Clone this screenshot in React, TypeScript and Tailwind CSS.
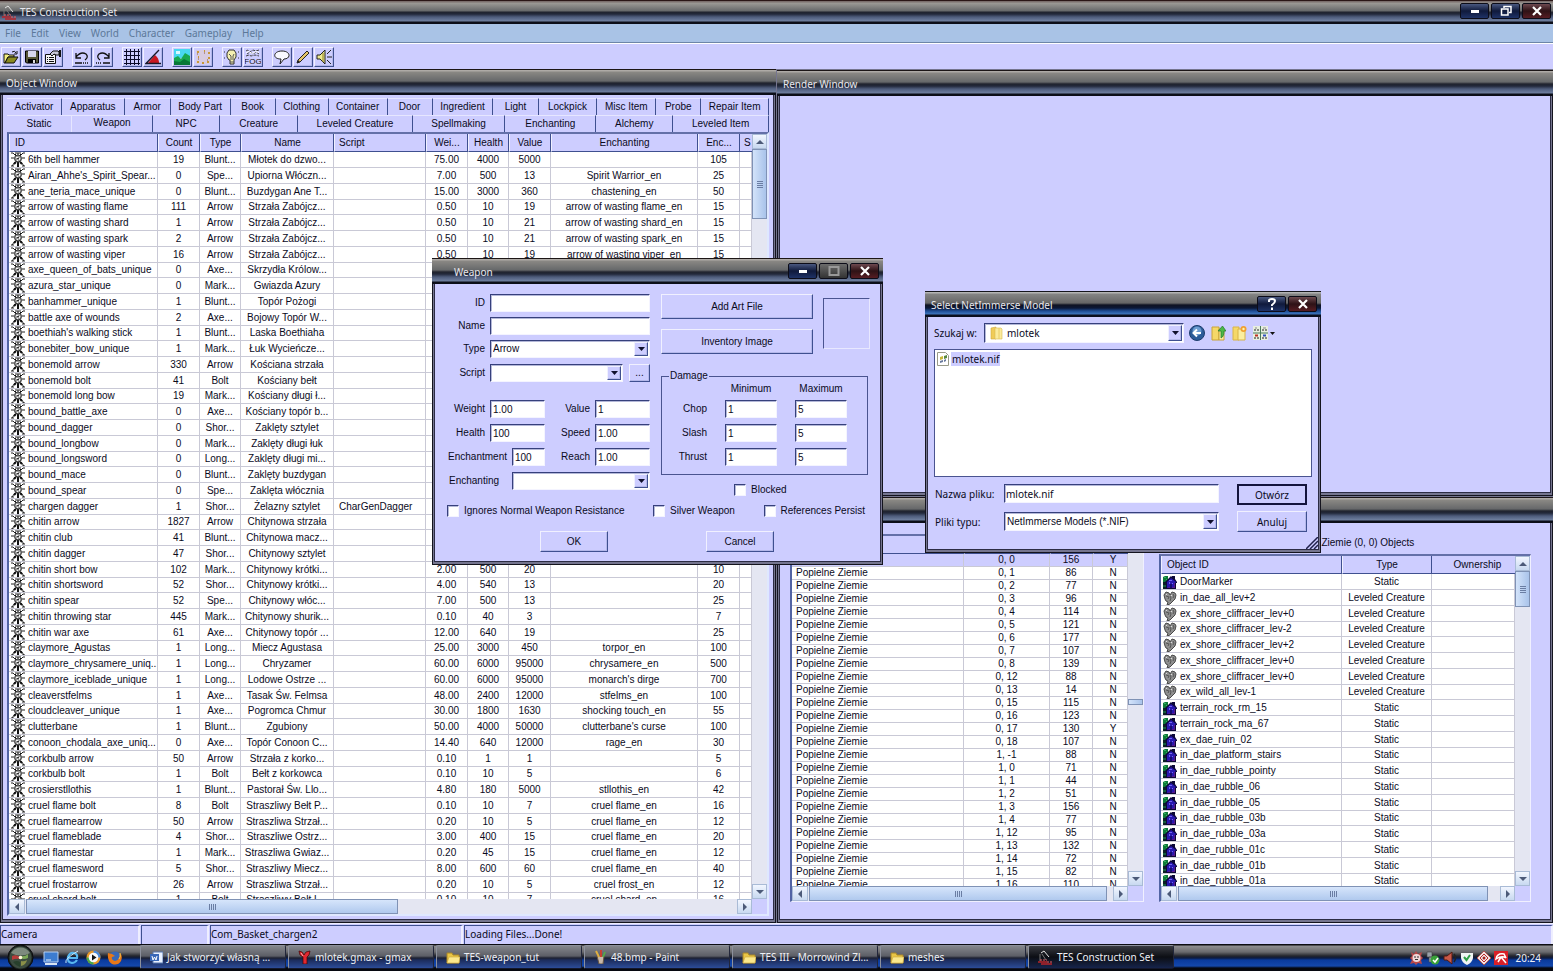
import { ReactNode } from "react";

type WeaponRow = string[];

// id, count, type, name, script, weight, health, value, enchanting, enchant points
const weapons: WeaponRow[] = [
  ["6th bell hammer", "19", "Blunt...", "Młotek do dzwo...", "", "75.00", "4000", "5000", "", "105"],
  ["Airan_Ahhe's_Spirit_Spear...", "0", "Spe...", "Upiorna Włóczn...", "", "7.00", "500", "13", "Spirit Warrior_en", "25"],
  ["ane_teria_mace_unique", "0", "Blunt...", "Buzdygan Ane T...", "", "15.00", "3000", "360", "chastening_en", "50"],
  ["arrow of wasting flame", "111", "Arrow", "Strzała Zabójcz...", "", "0.50", "10", "19", "arrow of wasting flame_en", "15"],
  ["arrow of wasting shard", "1", "Arrow", "Strzała Zabójcz...", "", "0.50", "10", "21", "arrow of wasting shard_en", "15"],
  ["arrow of wasting spark", "2", "Arrow", "Strzała Zabójcz...", "", "0.50", "10", "21", "arrow of wasting spark_en", "15"],
  ["arrow of wasting viper", "16", "Arrow", "Strzała Zabójcz...", "", "0.50", "10", "19", "arrow of wasting viper_en", "15"],
  ["axe_queen_of_bats_unique", "0", "Axe...", "Skrzydła Królow..."],
  ["azura_star_unique", "0", "Mark...", "Gwiazda Azury"],
  ["banhammer_unique", "1", "Blunt...", "Topór Pożogi"],
  ["battle axe of wounds", "2", "Axe...", "Bojowy Topór W..."],
  ["boethiah's walking stick", "1", "Blunt...", "Laska Boethiaha"],
  ["bonebiter_bow_unique", "1", "Mark...", "Łuk Wycieńcze..."],
  ["bonemold arrow", "330", "Arrow", "Kościana strzała"],
  ["bonemold bolt", "41", "Bolt", "Kościany bełt"],
  ["bonemold long bow", "19", "Mark...", "Kościany długi ł..."],
  ["bound_battle_axe", "0", "Axe...", "Kościany topór b..."],
  ["bound_dagger", "0", "Shor...", "Zaklęty sztylet"],
  ["bound_longbow", "0", "Mark...", "Zaklęty długi łuk"],
  ["bound_longsword", "0", "Long...", "Zaklęty długi mi..."],
  ["bound_mace", "0", "Blunt...", "Zaklęty buzdygan"],
  ["bound_spear", "0", "Spe...", "Zaklęta włócznia"],
  ["chargen dagger", "1", "Shor...", "Żelazny sztylet", "CharGenDagger"],
  ["chitin arrow", "1827", "Arrow", "Chitynowa strzała"],
  ["chitin club", "41", "Blunt...", "Chitynowa macz..."],
  ["chitin dagger", "47", "Shor...", "Chitynowy sztylet"],
  ["chitin short bow", "102", "Mark...", "Chitynowy krótki...", "", "2.00", "500", "20", "", "10"],
  ["chitin shortsword", "52", "Shor...", "Chitynowy krótki...", "", "4.00", "540", "13", "", "20"],
  ["chitin spear", "52", "Spe...", "Chitynowy włóc...", "", "7.00", "500", "13", "", "25"],
  ["chitin throwing star", "445", "Mark...", "Chitynowy shurik...", "", "0.10", "40", "3", "", "7"],
  ["chitin war axe", "61", "Axe...", "Chitynowy topór ...", "", "12.00", "640", "19", "", "25"],
  ["claymore_Agustas", "1", "Long...", "Miecz Agustasa", "", "25.00", "3000", "450", "torpor_en", "100"],
  ["claymore_chrysamere_uniq...", "1", "Long...", "Chryzamer", "", "60.00", "6000", "95000", "chrysamere_en", "500"],
  ["claymore_iceblade_unique", "1", "Long...", "Lodowe Ostrze ...", "", "60.00", "6000", "95000", "monarch's dirge", "700"],
  ["cleaverstfelms", "1", "Axe...", "Tasak Św. Felmsa", "", "48.00", "2400", "12000", "stfelms_en", "100"],
  ["cloudcleaver_unique", "1", "Axe...", "Pogromca Chmur", "", "30.00", "1800", "1630", "shocking touch_en", "55"],
  ["clutterbane", "1", "Blunt...", "Zgubiony", "", "50.00", "4000", "50000", "clutterbane's curse", "100"],
  ["conoon_chodala_axe_uniq...", "0", "Axe...", "Topór Conoon C...", "", "14.40", "640", "12000", "rage_en", "30"],
  ["corkbulb arrow", "50", "Arrow", "Strzała z korko...", "", "0.10", "1", "1", "", "5"],
  ["corkbulb bolt", "1", "Bolt", "Bełt z korkowca", "", "0.10", "10", "5", "", "6"],
  ["crosierstllothis", "1", "Blunt...", "Pastorał Św. Llo...", "", "4.80", "180", "5000", "stllothis_en", "42"],
  ["cruel flame bolt", "8", "Bolt", "Straszliwy Bełt P...", "", "0.10", "10", "7", "cruel flame_en", "16"],
  ["cruel flamearrow", "50", "Arrow", "Straszliwa Strzał...", "", "0.20", "10", "5", "cruel flame_en", "12"],
  ["cruel flameblade", "4", "Shor...", "Straszliwe Ostrz...", "", "3.00", "400", "15", "cruel flame_en", "20"],
  ["cruel flamestar", "1", "Mark...", "Straszliwa Gwiaz...", "", "0.20", "45", "15", "cruel flame_en", "12"],
  ["cruel flamesword", "5", "Shor...", "Straszliwy Miecz...", "", "8.00", "600", "60", "cruel flame_en", "40"],
  ["cruel frostarrow", "26", "Arrow", "Straszliwa Strzał...", "", "0.20", "10", "5", "cruel frost_en", "12"],
  ["cruel shard bolt", "1", "Bolt", "Straszliwy Bełt L...", "", "0.10", "10", "7", "cruel shard_en", "16"],
];

const cells = [
  ["0, 0", "156", "Y"], ["0, 1", "86", "N"], ["0, 2", "77", "N"], ["0, 3", "96", "N"],
  ["0, 4", "114", "N"], ["0, 5", "121", "N"], ["0, 6", "177", "N"], ["0, 7", "107", "N"],
  ["0, 8", "139", "N"], ["0, 12", "88", "N"], ["0, 13", "14", "N"], ["0, 15", "115", "N"],
  ["0, 16", "123", "N"], ["0, 17", "130", "Y"], ["0, 18", "107", "N"], ["1, -1", "88", "N"],
  ["1, 0", "71", "N"], ["1, 1", "44", "N"], ["1, 2", "51", "N"], ["1, 3", "156", "N"],
  ["1, 4", "77", "N"], ["1, 12", "95", "N"], ["1, 13", "132", "N"], ["1, 14", "72", "N"],
  ["1, 15", "82", "N"], ["1, 16", "110", "N"],
];

const cellObjects = [
  ["DoorMarker", "Static"],
  ["in_dae_all_lev+2", "Leveled Creature"],
  ["ex_shore_cliffracer_lev+0", "Leveled Creature"],
  ["ex_shore_cliffracer_lev-2", "Leveled Creature"],
  ["ex_shore_cliffracer_lev+2", "Leveled Creature"],
  ["ex_shore_cliffracer_lev+0", "Leveled Creature"],
  ["ex_shore_cliffracer_lev+0", "Leveled Creature"],
  ["ex_wild_all_lev-1", "Leveled Creature"],
  ["terrain_rock_rm_15", "Static"],
  ["terrain_rock_ma_67", "Static"],
  ["ex_dae_ruin_02", "Static"],
  ["in_dae_platform_stairs", "Static"],
  ["in_dae_rubble_pointy", "Static"],
  ["in_dae_rubble_06", "Static"],
  ["in_dae_rubble_05", "Static"],
  ["in_dae_rubble_03b", "Static"],
  ["in_dae_rubble_03a", "Static"],
  ["in_dae_rubble_01c", "Static"],
  ["in_dae_rubble_01b", "Static"],
  ["in_dae_rubble_01a", "Static"],
];

const topTabs = [
  ["Activator", "grow-55"], ["Apparatus", "grow-63"], ["Armor", "grow-46"], ["Body Part", "grow-60"],
  ["Book", "grow-45"], ["Clothing", "grow-53"], ["Container", "grow-59"], ["Door", "grow-45"],
  ["Ingredient", "grow-61"], ["Light", "grow-45"], ["Lockpick", "grow-59"], ["Misc Item", "grow-59"],
  ["Probe", "grow-45"], ["Repair Item", "grow-68"],
];

const bottomTabs = [
  ["Static", "grow-65"], ["Weapon", "grow-81"], ["NPC", "grow-67"], ["Creature", "grow-78"],
  ["Leveled Creature", "grow-115"], ["Spellmaking", "grow-93"], ["Enchanting", "grow-91"],
  ["Alchemy", "grow-77"], ["Leveled Item", "grow-96"],
];

const raised =
  "border border-t-[#f0f0ff] border-l-[#f0f0ff] border-r-[#3f5090] border-b-[#3f5090] bg-[#cdcdff] shadow-[inset_-1px_-1px_0_#b4b8ea]";
const sunken =
  "border border-t-[#36407c] border-l-[#36407c] border-r-[#f4f4ff] border-b-[#f4f4ff] bg-white shadow-[inset_1px_1px_0_#b4b8d8]";
const sans = "font-['Liberation_Sans',Arial,sans-serif]";
const tahoma = "font-['Noto_Sans',sans-serif] text-[10px]";

function SwordIcon() {
  return (
    <svg width="14" height="15" viewBox="0 0 14 15" className="shrink-0">
      <path d="M0 1h2l3 3M14 1h-2L9 4M0 6h3M11 6h3M1 14l3-4M13 14l-3-4M4 1h6M7 1v2M0 14h3M11 14h3" stroke="#222" fill="none" />
      <path d="M4 2h1v1H4zM9 2h1v1H9zM6 10h2v5H6z" fill="#111" />
      <circle cx="7" cy="6.500" r="3.500" fill="#9a9a9a" stroke="#333" />
      <path d="M5 5h2v1H5zM8 6h1v2H8zM6 8h1v1H6z" fill="#f4f4f4" />
      <path d="M6 6h2v1H6z" fill="#333" />
      <path d="M3 12l2-2M11 12l-2-2" stroke="#111" strokeWidth="2" />
    </svg>
  );
}

function HouseIcon() {
  return (
    <svg width="14" height="14" viewBox="0 0 14 14" className="shrink-0">
      <path d="M0 2l2-1h3v4l-2 3H0z" fill="#0e7a38" />
      <path d="M1 2h2v1H1zM3 4h1v1H3z" fill="#38b060" />
      <path d="M0 7h4v7H0z" fill="#0a2024" />
      <path d="M0 10h3v2H0z" fill="#145c3c" />
      <path d="M2 7l6-6 1 1V1h3v3l2 3v1h-1v6H3V8H2z" fill="#0c0838" />
      <path d="M4 7l4-4 5 4-1 1v5H4z" fill="#2818b0" />
      <path d="M11 8h1v5h-1zM5 12h7v1H5z" fill="#58188c" />
      <path d="M6 5h3v1H6zM6 7h1v2H6zM9 8h1v1H9z" fill="#7468f0" />
      <path d="M7 9h2v4H7z" fill="#160c70" />
    </svg>
  );
}

function CreatureIcon() {
  return (
    <svg width="14" height="14" viewBox="0 0 14 14" className="shrink-0">
      <path d="M1 4l2-3 3 1 1 2 2-3 3 1 1 2-1 4-3 3-2 2-3 1H4l1-3-2-1-1-2z" fill="#8f8f8f" stroke="#484848" />
      <path d="M3 5l3 1-1 2M7 5l1 2-1 3M10 3l1 2-1 2" stroke="#555" fill="none" />
      <path d="M3 3h1v1H3zM8 4h1v1H8z" fill="#ddd" />
    </svg>
  );
}

function FolderIcon() {
  return (
    <svg width="14" height="13" viewBox="0 0 14 13" className="shrink-0">
      <path d="M1 2h5l1 2h6v8H1z" fill="#e9c544" stroke="#a8862a" />
      <path d="M1 12l2-6h11l-1 6z" fill="#fbe88c" stroke="#c9a63c" strokeWidth=".6" />
    </svg>
  );
}

// yellow half-open folder used in the "look in" box
function OpenFolderIcon() {
  return (
    <svg width="13" height="14" viewBox="0 0 13 14" className="shrink-0">
      <path d="M1 2l5-1v12H1z" fill="#f0cc58" stroke="#d0a840" strokeWidth=".6" />
      <path d="M5 2h6l1 1v10H5z" fill="#fbeb9c" stroke="#d8b850" strokeWidth=".6" />
      <path d="M9 2v11" stroke="#e8cc68" />
    </svg>
  );
}

function AppIcon() {
  return (
    <svg width="15" height="15" viewBox="0 0 15 15" className="shrink-0">
      <path d="M3 3l3-2 5 6" stroke="#e4e4e4" fill="none" />
      <path d="M2 4v7M4 4l4 6" stroke="#777" fill="none" />
      <path d="M0 12h9M3 14h11" stroke="#b8242a" strokeWidth="1.500" />
      <path d="M2 10h7M9 12h5" stroke="#e86060" strokeDasharray="2 1" />
    </svg>
  );
}

function Arrow({ dir }: { dir: "up" | "down" | "left" | "right" }) {
  const paths = {
    up: "M0 6l4-4 4 4z",
    down: "M0 2l4 4 4-4z",
    left: "M6 0L2 4l4 4z",
    right: "M2 0l4 4-4 4z",
  };
  return (
    <svg width="8" height="8" viewBox="0 0 8 8">
      <path d={paths[dir]} fill="#4c5a78" />
    </svg>
  );
}

const scrollButton =
  "flex items-center justify-center shrink-0 border border-[#a9bbd6] bg-linear-to-b from-[#f2f6ff] to-[#c8d9f0]";

type ScrollProps = {
  thumb: string;
  before?: string;
  grip?: boolean;
};

function VScroll({ thumb, before, grip = true }: ScrollProps) {
  return (
    <div className="flex flex-col w-[15px] shrink-0 bg-[#e4e6f2]">
      <button aria-label="Scroll up" className={`${scrollButton} h-[15px]`}>
        <Arrow dir="up" />
      </button>
      {before && <div className={before} />}
      <div className={`flex flex-col items-center justify-center gap-px border border-[#7f92b5] bg-linear-to-r from-[#d3e3fa] to-[#a9c3ea] ${thumb}`}>
        {grip && [0, 1, 2, 3].map((i) => <span key={i} className="w-[6px] h-px bg-[#6a7da3]" />)}
      </div>
      <div className="flex-1" />
      <button aria-label="Scroll down" className={`${scrollButton} h-[15px]`}>
        <Arrow dir="down" />
      </button>
    </div>
  );
}

function HScroll({ thumb }: ScrollProps) {
  return (
    <div className="flex h-[15px] shrink-0 flex-1 bg-[#e4e6f2]">
      <button aria-label="Scroll left" className={`${scrollButton} w-[16px]`}>
        <Arrow dir="left" />
      </button>
      <div className={`flex items-center justify-center gap-px ml-px border border-[#7f92b5] bg-linear-to-b from-[#d6e5fb] to-[#b0c9ee] ${thumb}`}>
        {[0, 1, 2, 3].map((i) => <span key={i} className="w-px h-[6px] bg-[#6a7da3]" />)}
      </div>
      <div className="grow" />
      <button aria-label="Scroll right" className={`${scrollButton} w-[15px]`}>
        <Arrow dir="right" />
      </button>
    </div>
  );
}

function CaptionButton({ kind }: { kind: "min" | "max" | "restore" | "close" | "help" }) {
  const bg =
    kind === "close"
      ? "bg-linear-to-b from-[#6e4a50] via-[#2e1216] to-[#561c22]"
      : kind === "max"
        ? "bg-linear-to-b from-[#6c6c6c] to-[#333]"
        : "bg-linear-to-b from-[#4a5880] via-[#101a3c] to-[#1e3266]";
  return (
    <button aria-label={kind} className={`flex items-center justify-center w-[29px] h-4 rounded-[2px] border border-[#0c0c18] ${bg}`}>
      <svg width="12" height="12" viewBox="0 0 12 12" fill="none" stroke="#fff">
        {kind === "min" && <path d="M2 6.500h8" strokeWidth="3" />}
        {kind === "max" && <path d="M1.500 2h9v8h-9z" stroke="#999" strokeWidth="2" />}
        {kind === "restore" && <path d="M4 3V1.500h7v6H9M1.500 4h6.500v6H1.500z" strokeWidth="1.500" />}
        {kind === "close" && <path d="M2 2l8 8M10 2l-8 8" strokeWidth="2.200" />}
        {kind === "help" && <path d="M3 4V2.500Q3 1 6 1t3 2-3 4v1M6 9.500V12" strokeWidth="2" />}
      </svg>
    </button>
  );
}

type TitleBarProps = {
  title: string;
  active?: boolean;
  icon?: ReactNode;
  textClass?: string;
  children?: ReactNode;
};

function TitleBar({ title, active, icon, textClass = "pl-[6px]", children }: TitleBarProps) {
  const bg = active
    ? "bg-[linear-gradient(to_bottom,#15151c_0_1px,#b4b4b4_1px_2px,#848484_3px,#666_12px,#0e1222_14px,#0c1836_17px,#1d4c94_20px,#3c74bc_23px,#0a0e1e_24px)]"
    : "bg-[linear-gradient(to_bottom,#1c1616_0_1px,#aeaaa6_1px_2px,#8a8884_3px,#66686a_12px,#20232e_14px,#22283a_16px,#4e5c7c_19px,#6f7f9f_23px,#0c0e18_24px)]";
  return (
    <div className={`flex items-center h-[26px] shrink-0 text-[#e8e8ee] ${tahoma} ${bg}`}>
      {icon}
      <span className={`flex-1 pt-[2px] ${textClass}`}>{title}</span>
      <div className="flex gap-[2px] pr-1">{children}</div>
    </div>
  );
}

function Frame({ children, className = "" }: { children: ReactNode; className?: string }) {
  return (
    <div className={`flex-1 min-h-0 flex flex-col border-x border-b border-[#14141e] bg-[#75758f] px-px pb-[2px] ${className}`}>
      <div className="flex-1 min-h-0 flex flex-col border-x border-b border-[#2c2c44] bg-[#cdcdff]">{children}</div>
    </div>
  );
}

const th =
  "h-[18px] p-0 font-normal border-b border-r border-b-[#3f5090] border-r-[#3f5090] bg-[#cdcdff] border-l border-l-[#f0f0ff]";
const td = "p-0 text-center border-r border-b border-[#c9c9d6] overflow-hidden";

function Tabs({ items }: { items: string[][] }) {
  return (
    <div role="tablist" className="flex h-[17px]">
      {items.map(([label, grow]) => (
        <button
          key={label}
          role="tab"
          aria-selected={label === "Weapon"}
          className={`basis-0 min-w-0 ${grow} border-t border-t-[#e6e6ff] ${
            label === "Weapon" ? "pb-[3px]" : ""
          } ${label === "Static" ? "border-r border-r-[#e6e6ff]" : "border-r border-r-[#3f5090]"} leading-[14px]`}
        >
          {label}
        </button>
      ))}
    </div>
  );
}

function ObjectWindow() {
  return (
    <section className="flex-1 min-w-0 flex flex-col">
      <TitleBar title="Object Window" />
      <Frame>
        <div className="flex-1 min-h-0 flex flex-col pt-[3px] px-[4px] pb-[3px]">
          <Tabs items={topTabs} />
          <Tabs items={bottomTabs} />
          <div className="flex-1 min-h-0 flex flex-col border-2 border-t-[#6470a8] border-l-[#5264a4] border-r-[#dfe8ff] border-b-[#dfe8ff]">
            <div className="flex-1 min-h-0 flex bg-white">
              <div className="flex-1 min-w-0 overflow-hidden">
                <table className="w-full table-fixed border-separate border-spacing-0 whitespace-nowrap leading-[14px]">
                  <colgroup>
                    <col className="w-[149px]" />
                    <col className="w-[42px]" />
                    <col className="w-[41px]" />
                    <col className="w-[93px]" />
                    <col className="w-[92px]" />
                    <col className="w-[42px]" />
                    <col className="w-[41px]" />
                    <col className="w-[42px]" />
                    <col />
                    <col className="w-[42px]" />
                    <col className="w-[12px]" />
                  </colgroup>
                  <thead>
                    <tr>
                      <th className={`${th} text-left pl-[5px]`}>ID</th>
                      <th className={th}>Count</th>
                      <th className={th}>Type</th>
                      <th className={th}>Name</th>
                      <th className={`${th} text-left pl-[4px]`}>Script</th>
                      <th className={th}>Wei...</th>
                      <th className={th}>Health</th>
                      <th className={th}>Value</th>
                      <th className={th}>Enchanting</th>
                      <th className={th}>Enc...</th>
                      <th className="h-[18px] p-0 font-normal border-b border-[#3f5090] bg-[#cdcdff] pl-[4px] text-left">S</th>
                    </tr>
                  </thead>
                  <tbody>
                    {weapons.map((row) => (
                      <tr key={row[0]} className="h-4 nth-[4n]:h-[15px]">
                        <td className={td}>
                          <div className="flex items-center h-[14px] pl-[2px] gap-[3px]">
                            <SwordIcon />
                            {row[0]}
                          </div>
                        </td>
                        {[1, 2, 3, 4, 5, 6, 7, 8, 9, 10].map((i) => (
                          <td key={i} className={`${td} ${i === 4 ? "text-left pl-[5px]" : ""}`}>
                            {row[i]}
                          </td>
                        ))}
                      </tr>
                    ))}
                  </tbody>
                </table>
              </div>
              <VScroll thumb="h-[70px]" />
            </div>
            <div className="flex bg-[#cdcdff]">
              <HScroll thumb="w-[372px]" />
              <div className="w-[15px]" />
            </div>
          </div>
        </div>
      </Frame>
    </section>
  );
}

function CellWindow() {
  return (
    <section className="flex-1 min-h-0 flex flex-col">
      <TitleBar title="" />
      <Frame>
        <div className="flex-1 min-h-0 flex gap-[15px] pt-[11px] pl-[10px] pr-[19px] pb-[17px]">
          <div className="w-[354px] flex flex-col border-t-2 border-l-2 border-r border-b border-t-[#6470a8] border-l-[#5264a4] border-[#f0f0ff]">
            <div className="flex-1 min-h-0 flex bg-white">
              <div className="flex-1 min-w-0 overflow-hidden">
                <table className="w-full table-fixed border-separate border-spacing-0 whitespace-nowrap leading-[12px]">
                  <colgroup>
                    <col />
                    <col className="w-[86px]" />
                    <col className="w-[43px]" />
                    <col className="w-[35px]" />
                  </colgroup>
                  <thead>
                    <tr>
                      <th className={th} />
                      <th className={th} />
                      <th className={th} />
                      <th className={th} />
                    </tr>
                  </thead>
                  <tbody>
                    {cells.map(([grid, count, path], i) => (
                      <tr key={grid} className={`h-[13px] ${i === 0 ? "bg-[#cdcdff]" : ""}`}>
                        <td className={`${td} text-left pl-[4px]`}>Popielne Ziemie</td>
                        <td className={td}>{grid}</td>
                        <td className={td}>{count}</td>
                        <td className={`${td} pl-[6px]`}>{path}</td>
                      </tr>
                    ))}
                  </tbody>
                </table>
              </div>
              <VScroll before="h-[148px]" thumb="h-[6px]" grip={false} />
            </div>
            <div className="flex bg-[#cdcdff]">
              <HScroll thumb="w-[298px]" />
              <div className="w-[15px]" />
            </div>
          </div>
          <div className="flex-1 min-w-0 flex flex-col">
            <h2 className="h-[20px] pt-px pl-[4px] text-center leading-[16px]">Popielne Ziemie (0, 0) Objects</h2>
            <div className="flex-1 min-h-0 flex flex-col border-t-2 border-l-2 border-r border-b border-t-[#6470a8] border-l-[#5264a4] border-[#f0f0ff]">
              <div className="flex-1 min-h-0 flex bg-white">
                <div className="flex-1 min-w-0 overflow-hidden">
                  <table className="w-full table-fixed border-separate border-spacing-0 whitespace-nowrap leading-[14px]">
                    <colgroup>
                      <col className="w-[181px]" />
                      <col className="w-[90px]" />
                      <col />
                    </colgroup>
                    <thead>
                      <tr>
                        <th className={`${th} text-left pl-[5px]`}>Object ID</th>
                        <th className={th}>Type</th>
                        <th className="h-[18px] p-0 pl-2 font-normal border-b border-[#3f5090] bg-[#cdcdff]">Ownership</th>
                      </tr>
                    </thead>
                    <tbody>
                      {cellObjects.map(([id, type], i) => (
                        <tr key={i} className="h-4 nth-[4n]:h-[15px]">
                          <td className={td}>
                            <div className="flex items-center h-[14px] pl-[2px] gap-[3px]">
                              {type === "Static" ? <HouseIcon /> : <CreatureIcon />}
                              {id}
                            </div>
                          </td>
                          <td className={td}>{type}</td>
                          <td className={td} />
                        </tr>
                      ))}
                    </tbody>
                  </table>
                </div>
                <VScroll thumb="h-[36px]" />
              </div>
              <div className="flex bg-[#cdcdff]">
                <HScroll thumb="w-[310px]" />
                <div className="w-[15px]" />
              </div>
            </div>
          </div>
        </div>
      </Frame>
    </section>
  );
}

type SelectProps = {
  id: string;
  value: string;
  className: string;
  inner?: string;
  icon?: ReactNode;
};

function SelectBox({ id, value, className, inner = "pl-[2px]", icon }: SelectProps) {
  return (
    <div className={`relative ${className}`}>
      <select id={id} defaultValue={value} className={`appearance-none w-full h-full ${sunken} ${inner}`}>
        <option>{value}</option>
      </select>
      {icon && <span className="absolute left-[6px] top-[3px] pointer-events-none">{icon}</span>}
      <span className={`absolute right-[2px] top-[2px] bottom-[2px] w-[14px] flex items-center justify-center pointer-events-none ${raised}`}>
        <svg width="7" height="4" viewBox="0 0 7 4">
          <path d="M0 0h7L3.500 4z" fill="#10102c" />
        </svg>
      </span>
    </div>
  );
}

type FieldProps = {
  label: string;
  value?: string;
  labelClass?: string;
  inputClass: string;
};

function Field({ label, value = "", labelClass = "w-[50px] text-right", inputClass }: FieldProps) {
  const id = `weapon-${label.toLowerCase()}`;
  return (
    <>
      <label htmlFor={id} className={labelClass}>{label}</label>
      <input id={id} defaultValue={value} className={`ml-[5px] h-[18px] pl-[2px] ${sunken} ${inputClass}`} />
    </>
  );
}

function Check({ label }: { label: string }) {
  return (
    <label className="flex items-center gap-[5px] whitespace-nowrap">
      <input type="checkbox" className={`appearance-none size-3 ${sunken}`} />
      {label}
    </label>
  );
}

function DamageRow({ kind }: { kind: string }) {
  return (
    <>
      <span className="text-right">{kind}</span>
      <input aria-label={`${kind} minimum`} defaultValue="1" className={`w-[52px] h-[18px] pl-[2px] ${sunken}`} />
      <input aria-label={`${kind} maximum`} defaultValue="5" className={`w-[52px] h-[18px] pl-[2px] ${sunken}`} />
    </>
  );
}

function WeaponDialog() {
  return (
    <div role="dialog" aria-label="Weapon" className="absolute left-[432px] top-[258px] w-[451px] h-[307px] flex flex-col">
      <TitleBar title="Weapon" textClass="pl-[22px]">
        <CaptionButton kind="min" />
        <CaptionButton kind="max" />
        <CaptionButton kind="close" />
      </TitleBar>
      <Frame>
        <div className="flex pt-[10px]">
          <div className="w-[215px] flex flex-col">
            <div className="flex items-center mb-[5px]">
              <Field label="ID" inputClass="w-[160px]" />
            </div>
            <div className="flex items-center mb-[5px]">
              <Field label="Name" inputClass="w-[160px]" />
            </div>
            <div className="flex items-center mb-[6px]">
              <label htmlFor="weapon-type" className="w-[50px] text-right">Type</label>
              <SelectBox id="weapon-type" value="Arrow" className="ml-[5px] w-[160px] h-[18px]" />
            </div>
            <div className="flex items-center mb-[18px]">
              <label htmlFor="weapon-script" className="w-[50px] text-right">Script</label>
              <SelectBox id="weapon-script" value="" className="ml-[5px] w-[133px] h-[18px]" />
              <button className={`ml-[6px] w-[21px] h-[18px] leading-[12px] ${raised}`}>...</button>
            </div>
            <div className="flex items-center mb-[6px]">
              <Field label="Weight" value="1.00" inputClass="w-[55px]" />
              <Field label="Value" value="1" labelClass="w-[45px] text-right" inputClass="w-[55px]" />
            </div>
            <div className="flex items-center mb-[6px]">
              <Field label="Health" value="100" inputClass="w-[55px]" />
              <Field label="Speed" value="1.00" labelClass="w-[45px] text-right" inputClass="w-[55px]" />
            </div>
            <div className="flex items-center mb-[6px]">
              <Field label="Enchantment" value="100" labelClass="w-[72px] text-right" inputClass="w-[33px]" />
              <Field label="Reach" value="1.00" labelClass="w-[45px] text-right" inputClass="w-[55px]" />
            </div>
            <div className="flex items-center">
              <label htmlFor="weapon-enchanting" className="w-[72px] pl-[14px]">Enchanting</label>
              <SelectBox id="weapon-enchanting" value="" className="ml-[5px] w-[138px] h-[18px]" />
            </div>
          </div>
          <div className="ml-[11px] flex flex-col">
            <div className="flex gap-[10px]">
              <div className="flex flex-col gap-[10px]">
                <button className={`w-[152px] h-[25px] ${raised}`}>Add Art File</button>
                <button className={`w-[152px] h-[25px] ${raised}`}>Inventory Image</button>
              </div>
              <div className="mt-[4px] w-[47px] h-[51px] border border-t-[#4a5490] border-l-[#4a5490] border-[#e8e8ff]" />
            </div>
            <fieldset className="mt-[15px] w-[207px] h-[106px] border border-[#4a5490] px-[7px]">
              <legend className="px-px leading-[14px]">Damage</legend>
              <div className="grid grid-cols-[38px_52px_52px] gap-x-[18px] gap-y-[6px] items-center">
                <span />
                <span className="text-center leading-[11px]">Minimum</span>
                <span className="text-center leading-[11px]">Maximum</span>
                {["Chop", "Slash", "Thrust"].map((kind) => (
                  <DamageRow key={kind} kind={kind} />
                ))}
              </div>
            </fieldset>
            <div className="mt-[8px] ml-[73px]">
              <Check label="Blocked" />
            </div>
          </div>
        </div>
        <div className="flex items-center justify-between mt-[7px] pl-[12px] pr-[15px]">
          <Check label="Ignores Normal Weapon Resistance" />
          <Check label="Silver Weapon" />
          <Check label="References Persist" />
        </div>
        <div className="flex gap-[98px] mt-[13px] pl-[105px]">
          <button className={`w-[68px] h-[21px] ${raised}`}>OK</button>
          <button className={`w-[68px] h-[21px] ${raised}`}>Cancel</button>
        </div>
      </Frame>
    </div>
  );
}

function FileDialog() {
  return (
    <div role="dialog" aria-label="Select NetImmerse Model" className="absolute left-[925px] top-[291px] w-[396px] h-[262px] flex flex-col">
      <TitleBar title="Select NetImmerse Model" active>
        <CaptionButton kind="help" />
        <CaptionButton kind="close" />
      </TitleBar>
      <Frame>
        <div className={`relative flex-1 flex flex-col pt-[6px] px-[6px] ${tahoma}`}>
          <div className="flex items-center">
            <label htmlFor="look-in" className="w-[50px]">Szukaj w:</label>
            <SelectBox id="look-in" value="mlotek" className="w-[200px] h-[20px]" inner="pl-[22px]" icon={<OpenFolderIcon />} />
            <div className="flex items-center gap-[6px] ml-[5px]">
              <button aria-label="Back">
                <svg width="16" height="16" viewBox="0 0 16 16">
                  <circle cx="8" cy="8" r="7.500" fill="#2c5c98" stroke="#1d3c6c" />
                  <circle cx="8" cy="6" r="4.500" fill="#6c9cd0" />
                  <path d="M12 8H5M8 4.500L4.500 8 8 11.500" stroke="#fff" strokeWidth="2" fill="none" />
                </svg>
              </button>
              <button aria-label="Up one level">
                <svg width="15" height="16" viewBox="0 0 15 16">
                  <path d="M1 2h7v13H1z" fill="#f5d868" stroke="#c8a438" />
                  <path d="M8 4h5v11H8z" fill="#fbeea0" stroke="#c8a438" />
                  <path d="M10 13V6H7l4.500-5L15 6h-2c0 4-1 6-3 7z" fill="#4cb848" stroke="#217a28" strokeWidth=".7" />
                </svg>
              </button>
              <button aria-label="New folder">
                <svg width="15" height="16" viewBox="0 0 15 16">
                  <path d="M1 2h6v13H1z" fill="#f5d868" stroke="#d8b448" />
                  <path d="M6 4h7v11H6z" fill="#fbeea0" stroke="#d8b448" />
                  <circle cx="11.500" cy="4" r="3" fill="#f0a030" />
                  <circle cx="11.500" cy="4" r="1.200" fill="#fff2b0" />
                </svg>
              </button>
              <button aria-label="View menu">
                <svg width="22" height="14" viewBox="0 0 22 14">
                  <path d="M0 0h15v14H0z" fill="#e8efe0" />
                  <path d="M7.500 0v14M0 7h15" stroke="#4a7a5a" />
                  <path d="M1 4h5M9 4h5M1 12h5M9 12h5" stroke="#222" strokeDasharray="2 1" />
                  <path d="M2 2h2M10 2h3" stroke="#888" />
                  <path d="M2 9.500h3" stroke="#c03020" strokeWidth="2" />
                  <path d="M10 9.500h3" stroke="#3050c0" strokeWidth="2" />
                  <path d="M17 6h5l-2.500 3z" fill="#111" />
                </svg>
              </button>
            </div>
          </div>
          <div className="mt-[6px] h-[128px] border border-[#4a5490] bg-white p-[2px]">
            <div className="flex items-center gap-[2px]">
              <svg width="12" height="14" viewBox="0 0 12 14">
                <path d="M.500.500h8l3 3v10H.500z" fill="#fff" stroke="#999a88" />
                <path d="M3 5l3-1v3L3 8z" fill="#c8b838" />
                <path d="M7 4l3-1v3L7 7z" fill="#58883c" />
                <path d="M3 9l3-1v2l-3 1zM7 8l2-1v2l-2 1z" fill="#6a7a9c" />
              </svg>
              <span className="bg-[#cdcdff] px-px leading-[14px]">mlotek.nif</span>
            </div>
          </div>
          <div className="flex mt-[7px]">
            <div className="w-[285px] flex flex-col gap-[9px]">
              <div className="flex items-center">
                <label htmlFor="file-name" className="w-[70px] pl-px">Nazwa pliku:</label>
                <input id="file-name" defaultValue="mlotek.nif" className={`w-[215px] h-[19px] pl-px ${sunken}`} />
              </div>
              <div className="flex items-center">
                <label htmlFor="file-type" className="w-[70px] pl-px">Pliki typu:</label>
                <SelectBox id="file-type" value="NetImmerse Models (*.NIF)" className={`w-[215px] h-[19px] ${sans}`} />
              </div>
            </div>
            <div className="ml-[18px] flex flex-col gap-[6px]">
              <button className="w-[70px] h-[21px] border-2 border-[#14143c] bg-[#cdcdff]">Otwórz</button>
              <button className={`w-[70px] h-[21px] ${raised}`}>Anuluj</button>
            </div>
          </div>
          <svg width="12" height="12" viewBox="0 0 12 12" className="absolute right-0 bottom-0">
            <path d="M0 12L12 0M4 12l8-8M8 12l4-4" stroke="#20204c" strokeWidth="1.500" />
          </svg>
        </div>
      </Frame>
    </div>
  );
}

const toolGroups: { name: string; icon: ReactNode }[][] = [
  [
    {
      name: "Open",
      icon: (
        <>
          <path d="M1 5h4l1 1h5v2H5l-3 6H1z" fill="#f4ee80" stroke="#111" />
          <path d="M2 14l3-6h10l-4 6z" fill="#8a8a20" stroke="#111" />
          <path d="M9 3q3-2 4 1M14 2v3h-3" stroke="#111" fill="none" />
        </>
      ),
    },
    {
      name: "Save",
      icon: (
        <>
          <path d="M1.500 2h13v12h-12l-1-1z" fill="#585838" stroke="#000" />
          <path d="M4 2h8v6H4z" fill="#d8d8ee" />
          <path d="M4 10h8v4H4z" fill="#000" />
          <path d="M9 11h2v3H9z" fill="#ddd" />
        </>
      ),
    },
    {
      name: "Preferences",
      icon: (
        <>
          <path d="M.500 5.500h10v9H.500z" fill="#f4f4f4" stroke="#111" />
          <path d="M2 8.500h1M4 8.500h5M2 10.500h1M4 10.500h5M2 12.500h1M4 12.500h5" stroke="#111" />
          <path d="M5 5l3-3h5l1 1v3h-3l-2-1-2 2z" fill="#c8c8d8" stroke="#111" />
          <path d="M14 1h2v7h-2z" fill="#111" />
        </>
      ),
    },
  ],
  [
    {
      name: "Undo",
      icon: (
        <>
          <path d="M2 4v5h5M2 8q5-6 10-3 3 3-1 6" stroke="#111" strokeWidth="1.300" fill="none" />
          <path d="M1 14h7" stroke="#111" strokeWidth="1.500" />
          <path d="M9 14h6" stroke="#111" strokeWidth="1.500" strokeDasharray="1 1" />
        </>
      ),
    },
    {
      name: "Redo",
      icon: (
        <>
          <path d="M14 4v5H9M14 8Q9 2 4 5q-3 3 1 6" stroke="#111" strokeWidth="1.300" fill="none" />
          <path d="M8 14h7" stroke="#111" strokeWidth="1.500" />
          <path d="M1 14h6" stroke="#111" strokeWidth="1.500" strokeDasharray="1 1" />
        </>
      ),
    },
  ],
  [
    {
      name: "Grid snap",
      icon: <path d="M2.500 0v16M6.500 0v16M10.500 0v16M14.500 0v16M0 2.500h16M0 6.500h16M0 10.500h16M0 14.500h16" stroke="#0a0a28" />,
    },
    {
      name: "Angle snap",
      icon: (
        <>
          <path d="M3 14l7-8q4 3 4 8z" fill="#c81820" />
          <path d="M14 1L1 14.500h15" stroke="#181828" strokeWidth="1.300" fill="none" />
        </>
      ),
    },
  ],
  [
    {
      name: "Landscape",
      icon: (
        <>
          <path d="M0 0h16v9H0z" fill="#48d8f0" />
          <path d="M2 2h4v3H2z" fill="#d8f8ff" />
          <path d="M0 9l4-2 3 3 4-6 5 3v9H0z" fill="#18a850" />
          <path d="M0 12l6 1 4-3 6 3v3H0z" fill="#087838" />
        </>
      ),
    },
    {
      name: "Path grid",
      icon: (
        <>
          <path d="M1 1h14v14H1z" fill="#d8cce0" />
          <path d="M2 3h2M9 2h1M13 4h2M3 8h1M13 9h2M2 13h2M7 14h2M12 13h2" stroke="#c89838" strokeWidth="2" />
          <path d="M2 5h1M9 4h1M3 10h1M12 11h1" stroke="#8a5040" />
        </>
      ),
    },
  ],
  [
    {
      name: "Lights",
      icon: (
        <>
          <path d="M5 11L3 8V4l2-3h5l2 3v4l-2 3v4H6v-4z" fill="#f4f0b0" stroke="#333" />
          <path d="M6 13h4M5 5l2 2v4M10 5L9 7v4" stroke="#555" fill="none" />
          <path d="M0 3h1M14 3h1M0 9h1M14 9h1" stroke="#333" />
        </>
      ),
    },
    {
      name: "Fog",
      icon: (
        <>
          <path d="M1 2l2-1 2 2 3-2 3 1 3-1M2 5l3-2 3 2 3-2 3 2M1 7l3-1 2 1 4-1 4 1" stroke="#444" fill="none" strokeDasharray="3 1" />
          <path d="M1 3.500l3-1 3 2 4-2 3 1" stroke="#fff" fill="none" />
          <text x="8" y="15" textAnchor="middle" fontSize="8" fontFamily="Liberation Sans" fill="#111">FOG</text>
        </>
      ),
    },
  ],
  [
    {
      name: "Dialogue",
      icon: <path d="M8 2c9 0 9 8 2 8l-4 5 1-5C-2 10-1 2 8 2z" fill="#f8f8ff" stroke="#222" />,
    },
    {
      name: "Script edit",
      icon: (
        <>
          <path d="M2 14l1-3 9-9 2 2-9 9z" fill="#e4c468" stroke="#222" />
          <path d="M2 14l1-3 2 2z" fill="#222" />
        </>
      ),
    },
    {
      name: "Sound",
      icon: (
        <>
          <path d="M1 6h3l5-5v14l-5-5H1z" fill="#ece890" stroke="#222" />
          <path d="M7 4v9" stroke="#908020" />
          <path d="M11 8h5M11 5l4-4M11 11l4 4" stroke="#222" />
        </>
      ),
    },
  ],
];

function Toolbar() {
  return (
    <div className="flex items-center gap-[9px] h-[26px] pl-px border-t border-white bg-[#cdcdff]">
      {toolGroups.map((group) => (
        <div key={group[0].name} className="flex gap-px">
          {group.map(({ name, icon }) => (
            <button key={name} aria-label={name} className={`flex items-center justify-center size-5 ${raised}`}>
              <svg width="16" height="16" viewBox="0 0 16 16">{icon}</svg>
            </button>
          ))}
        </div>
      ))}
    </div>
  );
}

const tasks: { label: string; icon: ReactNode; current?: boolean }[] = [
  {
    label: "Jak stworzyć własną ...",
    icon: (
      <svg width="13" height="13" viewBox="0 0 13 13">
        <path d="M3 1h10v11H3z" fill="#e8f0ff" stroke="#5878b0" />
        <path d="M0 3h9v7H0z" fill="#3868b8" />
        <path d="M2 5l1 4 1.500-3L6 9l1-4" stroke="#fff" fill="none" />
      </svg>
    ),
  },
  {
    label: "mlotek.gmax - gmax",
    icon: (
      <svg width="13" height="14" viewBox="0 0 13 14">
        <path d="M1 1l3 1 2 3 2-3 4-1-1 4-2 2v7H5V7L2 5z" fill="#e02830" stroke="#400" strokeWidth=".7" />
        <path d="M3 3l2 3" stroke="#ffb0b0" />
      </svg>
    ),
  },
  { label: "TES-weapon_tut", icon: <FolderIcon /> },
  {
    label: "48.bmp - Paint",
    icon: (
      <svg width="13" height="14" viewBox="0 0 13 14">
        <path d="M3 6h7l-1 8H5z" fill="#c8b8a8" stroke="#654" />
        <path d="M5 7L2 1" stroke="#e0b040" strokeWidth="2" />
        <path d="M7 7V0" stroke="#c84030" strokeWidth="2" />
        <path d="M9 7l2-5" stroke="#58a848" strokeWidth="2" />
      </svg>
    ),
  },
  { label: "TES III - Morrowind Zl...", icon: <FolderIcon /> },
  { label: "meshes", icon: <FolderIcon /> },
  { label: "TES Construction Set", icon: <AppIcon />, current: true },
];

function Taskbar() {
  return (
    <footer className={`flex h-[27px] shrink-0 text-[#eef0f6] bg-[linear-gradient(to_bottom,#0c0c12_0_1px,#8e8e90_2px,#6a6a6e_8px,#22242c_12px,#0c1a40_14px,#0a3a9c_16px,#1448ac_22px,#06080f_24px)] ${tahoma}`}>
      <div className="flex items-center w-[140px] pl-[7px]">
        <button aria-label="Start">
          <svg width="27" height="27" viewBox="0 0 27 27">
            <circle cx="13.500" cy="13.500" r="12.500" fill="#1c2420" stroke="#0a0a0c" />
            <circle cx="13.500" cy="13.500" r="11" fill="#3c4c40" />
            <path d="M4 9a11 11 0 0119 0q-9 5-19 0z" fill="#a8b4a8" opacity=".6" />
            <path d="M5 12q4-2 8 1v2q-4-1-8 1z" fill="#b83a3a" />
            <path d="M13 12q5 1 8-2v4q-4 2-8 0z" fill="#7ca858" />
            <path d="M6 18q4-2 7 0v5q-4-1-7-5z" fill="#28402c" />
            <path d="M14 17q3 1 6-1-1 5-6 6z" fill="#8a9048" />
            <circle cx="13.500" cy="13.500" r="1.800" fill="#fff8d8" />
          </svg>
        </button>
        <div className="flex items-center gap-[6px] ml-[9px]">
          <svg width="16" height="14" viewBox="0 0 16 14">
            <path d="M1 1h14v10H1z" fill="#3c7cd0" stroke="#b8d0f0" />
            <path d="M2 13h12" stroke="#d8e4f4" strokeWidth="2" />
            <path d="M3 9h5" stroke="#e8f0fc" />
          </svg>
          <svg width="15" height="15" viewBox="0 0 15 15">
            <path d="M12 10q-2 3-5 3-5-1-4-6 2-5 6-4 4 1 3 5H4" stroke="#58b8f0" strokeWidth="2.200" fill="none" />
            <path d="M1 13Q-1 9 13 1" stroke="#c8e8fc" fill="none" />
          </svg>
          <svg width="15" height="15" viewBox="0 0 15 15">
            <circle cx="7.500" cy="7.500" r="7" fill="#e89828" />
            <path d="M7.500.500a7 7 0 017 7h-7z" fill="#4888d8" />
            <path d="M.500 7.500a7 7 0 007 7v-7z" fill="#48a848" />
            <circle cx="7.500" cy="7.500" r="4.800" fill="#f8f8f8" />
            <path d="M6 4.500l4.500 3-4.500 3z" fill="#111" />
          </svg>
          <svg width="16" height="15" viewBox="0 0 16 15">
            <circle cx="8" cy="7.500" r="6" fill="#3868b8" />
            <path d="M1 3q-1 8 4 11 6 2 9-3 2-5-1-8 0 7-5 8-4-1-3-4l3-1-3-2z" fill="#e87818" />
            <path d="M13 3q1 4-1 6" stroke="#f8c848" fill="none" />
          </svg>
        </div>
      </div>
      <div className="flex gap-[2px]">
        {tasks.map(({ label, icon, current }) => (
          <button
            key={label}
            className={`flex items-center gap-[4px] w-[146px] h-6 mt-px pl-[9px] rounded-[2px] border border-[#8c909c] border-b-[#14182c] border-r-[#22263a] ${
              current
                ? "bg-linear-to-b from-[#3a3c42] via-[#0c0e14] to-[#16244c]"
                : "bg-[linear-gradient(to_bottom,#84868c,#5c5e66_10px,#1c2030_12px,#1c2c5c_14px,#2c4c98)]"
            }`}
          >
            {icon}
            {label}
          </button>
        ))}
      </div>
      <div className="flex items-center gap-[3px] ml-auto pr-[12px]">
        <svg width="13" height="14" viewBox="0 0 13 14">
          <path d="M1 1l3 2 2-3 2 3 4-2-1 4 2 2-2 2 1 4-4-1-2 2-2-2-4 1 2-4-2-2 2-2z" fill="#b84848" />
          <circle cx="6.500" cy="7" r="4" fill="#f0d8d8" />
          <path d="M4 6h2M7 6h2M5 8.500h3" stroke="#333" />
        </svg>
        <svg width="14" height="14" viewBox="0 0 14 14">
          <path d="M1 1h5v5H1zM3 6h6v5H3z" fill="#98a0a8" stroke="#444" strokeWidth=".6" />
          <circle cx="9" cy="9" r="4.500" fill="#38a038" />
          <path d="M7 9l2 2 3-4" stroke="#fff" strokeWidth="1.500" fill="none" />
        </svg>
        <svg width="14" height="14" viewBox="0 0 14 14">
          <path d="M1 5h3l5-4v12L4 9H1z" fill="#c85848" stroke="#501810" />
          <path d="M11 3q3 4 0 8" stroke="#222" strokeWidth="1.500" fill="none" />
        </svg>
        <svg width="14" height="14" viewBox="0 0 14 14">
          <path d="M1 2h12v5q-1 5-6 7-5-2-6-7z" fill="#f0f4f4" />
          <path d="M4 6l2.500 3L10 4" stroke="#30a048" strokeWidth="2" fill="none" />
        </svg>
        <svg width="14" height="14" viewBox="0 0 14 14">
          <path d="M7 0l7 7-7 7-7-7z" fill="#f0e4e4" stroke="#b05050" />
          <path d="M7 3l4 4-4 4-4-4z" fill="none" stroke="#c02828" />
          <circle cx="7" cy="7" r="1.500" fill="#a02020" />
        </svg>
        <svg width="14" height="14" viewBox="0 0 14 14">
          <path d="M0 0h14v14H0z" fill="#d82028" />
          <path d="M2 8q1-6 8-5l2 4q-4-3-10 1zM7 6l5 6M7 6l-3 5" stroke="#fff" fill="none" strokeWidth="1.500" />
        </svg>
        <span className="pl-[4px]">20:24</span>
      </div>
    </footer>
  );
}

const statusCell = "border-t border-l border-t-[#3f5090] border-l-[#3f5090] border-r-2 border-r-[#eeeeff] leading-[17px]";

export default function App() {
  return (
    <div className={`relative flex flex-col h-screen overflow-hidden bg-[#75758f] text-[#0a0a1c] text-[10px] leading-[14px] ${sans}`}>
      <header className="shrink-0">
        <div className={`flex items-center h-6 text-[#e8e8ee] bg-[linear-gradient(to_bottom,#2a1616_0_1px,#7a6e6c_1px_2px,#9c9a96_3px,#66686a_11px,#20232e_12px,#22283a_14px,#4e5c7c_17px,#6f7f9f_21px,#0c0e18_22px)] ${tahoma}`}>
          <div className="pl-[2px]">
            <AppIcon />
          </div>
          <h1 className="flex-1 pl-[3px]">TES Construction Set</h1>
          <div className="flex gap-[2px] pr-[2px] pb-[2px]">
            <CaptionButton kind="min" />
            <CaptionButton kind="restore" />
            <CaptionButton kind="close" />
          </div>
        </div>
        <nav className={`flex items-center gap-[10px] h-[19px] pl-[5px] bg-[#a9c3e6] text-[#5c7899] border-b border-[#6d86a8] ${tahoma}`}>
          {["File", "Edit", "View", "World", "Character", "Gameplay", "Help"].map((item) => (
            <button key={item}>{item}</button>
          ))}
        </nav>
        <Toolbar />
      </header>
      <main className="flex-1 min-h-0 flex">
        <ObjectWindow />
        <div className="flex-1 min-w-0 flex flex-col gap-px pt-px pl-px">
          <section className="flex-1 min-h-0 flex flex-col">
            <TitleBar title="Render Window" />
            <Frame>
              <div className="flex-1" />
            </Frame>
          </section>
          <CellWindow />
        </div>
      </main>
      <div className={`flex h-[21px] shrink-0 gap-px pt-px bg-[#cdcdff] border-t border-[#eeeeff] ${tahoma}`}>
        <div className={`w-[140px] ${statusCell}`}>Camera</div>
        <div className={`w-[68px] ${statusCell}`} />
        <div className={`w-[253px] ${statusCell}`}>Com_Basket_chargen2</div>
        <div className={`flex-1 ${statusCell}`}>Loading Files...Done!</div>
      </div>
      <Taskbar />
      <WeaponDialog />
      <FileDialog />
    </div>
  );
}
